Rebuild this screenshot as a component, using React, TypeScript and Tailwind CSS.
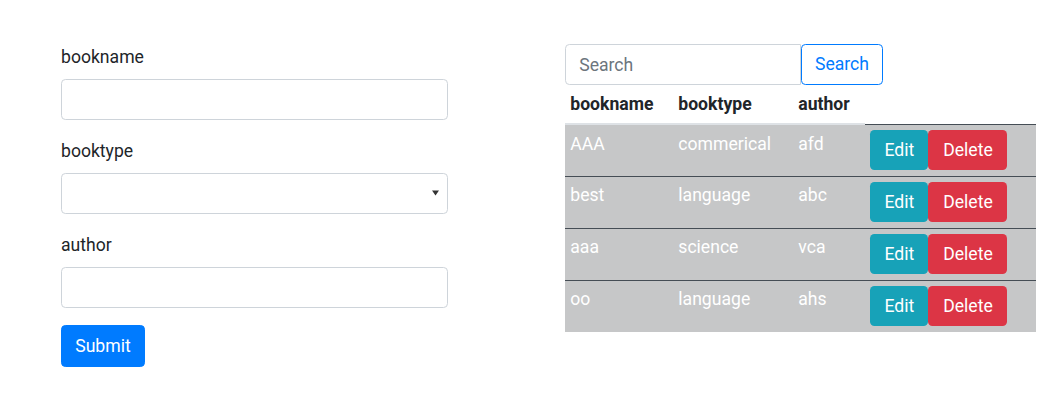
import React from "react";

type Book = { name: string; type: string; author: string };

const books: Book[] = [
  { name: "AAA", type: "commerical", author: "afd" },
  { name: "best", type: "language", author: "abc" },
  { name: "aaa", type: "science", author: "vca" },
  { name: "oo", type: "language", author: "ahs" },
];

const inputClass =
  "block w-full h-[41px] px-[13.2px] border border-[#ced4da] rounded-[4.4px] bg-white text-[#495057] outline-none";

const Field = ({ label, children }: { label: string; children: React.ReactNode }) => (
  <div className="mb-[17.6px]">
    <label className="block mb-[8.8px]">{label}</label>
    {children}
  </div>
);

const BookForm = () => (
  <form className="w-[387px] flex flex-col" onSubmit={(e) => e.preventDefault()}>
    <Field label="bookname">
      <input type="text" className={inputClass} />
    </Field>
    <Field label="booktype">
      <div className="relative">
        <select className={`${inputClass} appearance-none`} defaultValue="">
          <option value=""></option>
          <option value="commerical">commerical</option>
          <option value="language">language</option>
          <option value="science">science</option>
        </select>
        <svg
          className="absolute right-[9px] top-[17px] pointer-events-none"
          width="7"
          height="6"
          viewBox="0 0 7 6"
        >
          <path d="M0 0.5 H7 L3.5 5.5 Z" fill="#333" />
        </svg>
      </div>
    </Field>
    <Field label="author">
      <input type="text" className={inputClass} />
    </Field>
    <div>
      <button
        type="submit"
        className="h-[42px] px-[13.2px] rounded-[4.4px] bg-[#007bff] text-white border border-[#007bff]"
      >
        Submit
      </button>
    </div>
  </form>
);

const BookTable = () => (
  <div className="w-[471px]">
    <div className="flex">
      <input
        type="text"
        placeholder="Search"
        className="w-[236px] h-[41px] px-[13.2px] border border-[#ced4da] rounded-l-[4.4px] outline-none placeholder:text-[#6c757d]"
      />
      <button className="w-[82px] h-[41px] border border-[#007bff] text-[#007bff] rounded-[4.4px] bg-white">
        Search
      </button>
    </div>
    <table className="w-[471px] table-fixed border-collapse">
      <colgroup>
        <col className="w-[108px]" />
        <col className="w-[120px]" />
        <col className="w-[72px]" />
        <col />
      </colgroup>
      <thead>
        <tr>
          <th className="text-left font-bold px-[5.3px] py-[5.8px] border-b-2 border-[#dee2e6]">bookname</th>
          <th className="text-left font-bold px-[5.3px] py-[5.8px] border-b-2 border-[#dee2e6]">booktype</th>
          <th className="text-left font-bold px-[5.3px] py-[5.8px] border-b-2 border-[#dee2e6]">author</th>
        </tr>
      </thead>
      <tbody className="bg-[#c6c7c8] text-white">
        {books.map((book, i) => (
          <tr key={i}>
            <td className="align-top px-[5.3px] py-[5.5px] border-t border-[#454d55]">{book.name}</td>
            <td className="align-top px-[5.3px] py-[5.5px] border-t border-[#454d55]">{book.type}</td>
            <td className="align-top px-[5.3px] py-[5.5px] border-t border-[#454d55]">{book.author}</td>
            <td className="align-top px-[5.3px] py-[5.5px] border-t border-[#454d55]">
              <div className="flex">
                <button className="h-[40px] px-[14.2px] rounded-[4.4px] bg-[#17a2b8] text-white">Edit</button>
                <button className="h-[40px] px-[14.7px] rounded-[4.4px] bg-[#dc3545] text-white">Delete</button>
              </div>
            </td>
          </tr>
        ))}
      </tbody>
    </table>
  </div>
);

export default function App() {
  return (
    <div className="min-h-screen bg-white font-['Roboto','Liberation_Sans',sans-serif] text-[17.6px] leading-[26.4px] text-[#212529] pt-[44px] pl-[61px] flex gap-[117px]">
      <BookForm />
      <BookTable />
    </div>
  );
}
